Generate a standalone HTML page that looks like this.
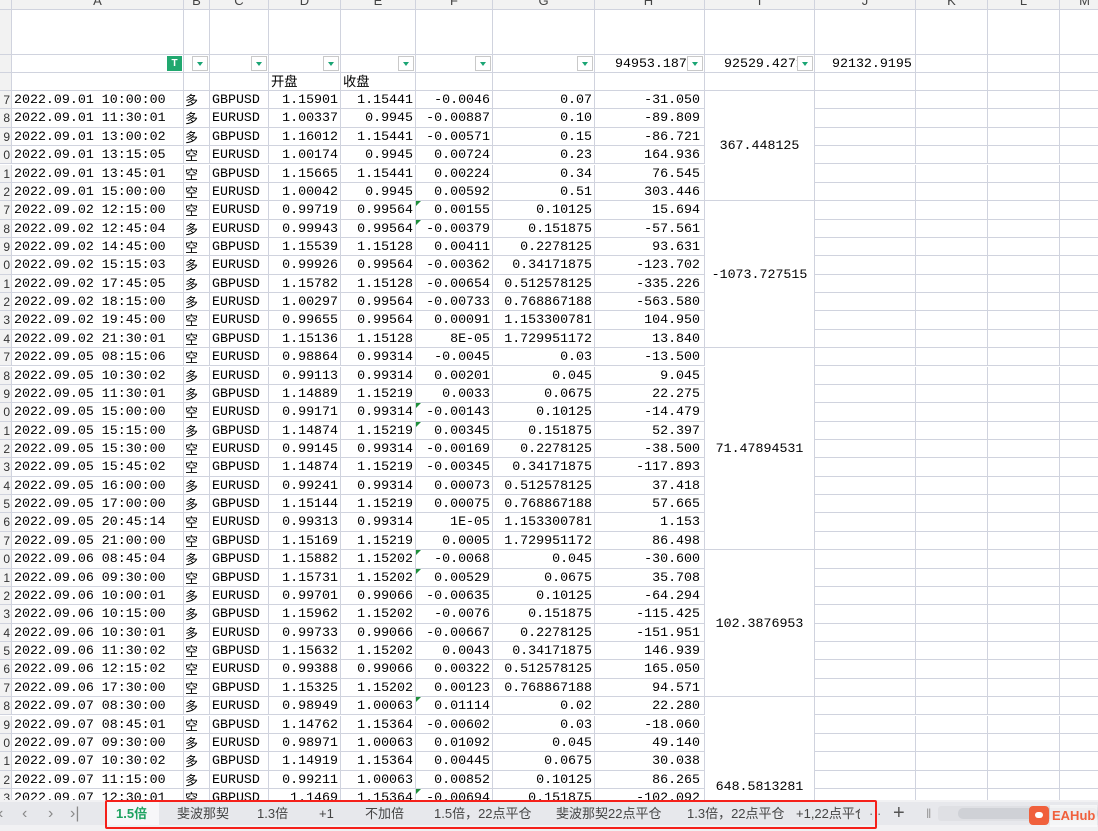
<!DOCTYPE html>
<html style="overflow:hidden;height:831px"><head><meta charset="utf-8">
<style>
*{margin:0;padding:0;box-sizing:border-box}
body{width:1098px;height:831px;overflow:hidden;background:#fff;position:relative;font-family:"Liberation Mono","Noto Sans CJK SC",monospace;font-size:13.3px;color:#000}
.r{position:absolute;left:0;height:18.4px;display:flex;width:1110px}
.c{border-right:1px solid #d0d3de;border-bottom:1px solid #d0d3de;height:100%;overflow:hidden;white-space:nowrap;line-height:18px;padding:0 2px;flex:none;position:relative}
.rh{width:12px;background:#f2f2f2;color:#333;font-size:12px;text-align:right;padding:0 1px;font-family:"Liberation Sans",sans-serif}
.a{width:172px}.b{width:26px;font-family:"Noto Sans CJK SC",sans-serif;font-size:13px;padding:0 1px}.cc{width:59px}.d{width:72px;text-align:right}.e{width:75px;text-align:right}.f{width:77px;text-align:right}.g{width:102px;text-align:right}.h{width:110px;text-align:right;padding-right:4px}.i{width:110px;border-bottom:none}.j{width:101px}.k{width:72px}.l{width:72px}.m{width:50px}
.hd .c{background:#f2f2f2;text-align:center;line-height:2px;color:#444;font-family:"Liberation Sans",sans-serif;font-size:13px}
.fb{position:absolute;right:1px;top:1px;width:16px;height:15px;background:#fff;border:1px solid #c9c9c9}
.fb:after{content:"";position:absolute;left:4px;top:5px;border-left:3.5px solid transparent;border-right:3.5px solid transparent;border-top:4px solid #1aa574}
.tri{position:absolute;left:0;top:0;border-top:5px solid #1e8f3a;border-right:5px solid transparent}
.mg{position:absolute;left:705px;width:110px;border-right:1px solid #d0d3de;border-bottom:1px solid #d0d3de;display:flex;align-items:center;justify-content:center;background:#fff}
.cn{font-family:"Liberation Sans","Noto Sans CJK SC",sans-serif}
</style></head><body>

<div class="r hd" style="top:0;height:10px"><div class="c rh"></div><div class="c a">A</div><div class="c b" style="text-align:center">B</div><div class="c cc">C</div><div class="c d" style="text-align:center">D</div><div class="c e" style="text-align:center">E</div><div class="c f" style="text-align:center">F</div><div class="c g" style="text-align:center">G</div><div class="c h" style="text-align:center">H</div><div class="c i" style="border-bottom:1px solid #d0d3de">I</div><div class="c j">J</div><div class="c k">K</div><div class="c l">L</div><div class="c m">M</div></div>

<div class="r" style="top:10px;height:45px"><div class="c rh"></div><div class="c a"></div><div class="c b"></div><div class="c cc"></div><div class="c d"></div><div class="c e"></div><div class="c f"></div><div class="c g"></div><div class="c h"></div><div class="c i" style="border-bottom:1px solid #d0d3de"></div><div class="c j"></div><div class="c k"></div><div class="c l"></div><div class="c m"></div></div>

<div class="r" style="top:55px;height:18px"><div class="c rh"></div><div class="c a"><span style="position:absolute;right:1px;top:1px;width:15px;height:15px;background:#21a86f;color:#fff;font-size:10px;line-height:15px;text-align:center;font-family:'Liberation Sans',sans-serif;font-weight:bold">T</span></div><div class="c b"><span class="fb"></span></div><div class="c cc"><span class="fb"></span></div><div class="c d"><span class="fb"></span></div><div class="c e"><span class="fb"></span></div><div class="c f"><span class="fb"></span></div><div class="c g"><span class="fb"></span></div><div class="c h" style="text-align:left;padding-left:20px">94953.1877<span class="fb"></span></div><div class="c i" style="border-bottom:1px solid #d0d3de;padding-left:19px">92529.4271<span class="fb"></span></div><div class="c j" style="overflow:visible;padding-left:17px">92132.9195</div><div class="c k"></div><div class="c l"></div><div class="c m"></div></div>

<div class="r" style="top:73px;height:18px"><div class="c rh"></div><div class="c a"></div><div class="c b"></div><div class="c cc"></div><div class="c d cn" style="text-align:left">开盘</div><div class="c e cn" style="text-align:left">收盘</div><div class="c f"></div><div class="c g"></div><div class="c h"></div><div class="c i" style="border-bottom:1px solid #d0d3de"></div><div class="c j"></div><div class="c k"></div><div class="c l"></div><div class="c m"></div></div>

<div class="r" style="top:91.0px"><div class="c rh">7</div><div class="c a">2022.09.01 10:00:00</div><div class="c b">多</div><div class="c cc">GBPUSD</div><div class="c d">1.15901</div><div class="c e">1.15441</div><div class="c f">-0.0046</div><div class="c g">0.07</div><div class="c h">-31.050</div><div class="c i"></div><div class="c j"></div><div class="c k"></div><div class="c l"></div><div class="c m"></div></div>
<div class="r" style="top:109.4px"><div class="c rh">8</div><div class="c a">2022.09.01 11:30:01</div><div class="c b">多</div><div class="c cc">EURUSD</div><div class="c d">1.00337</div><div class="c e">0.9945</div><div class="c f">-0.00887</div><div class="c g">0.10</div><div class="c h">-89.809</div><div class="c i"></div><div class="c j"></div><div class="c k"></div><div class="c l"></div><div class="c m"></div></div>
<div class="r" style="top:127.7px"><div class="c rh">9</div><div class="c a">2022.09.01 13:00:02</div><div class="c b">多</div><div class="c cc">GBPUSD</div><div class="c d">1.16012</div><div class="c e">1.15441</div><div class="c f">-0.00571</div><div class="c g">0.15</div><div class="c h">-86.721</div><div class="c i"></div><div class="c j"></div><div class="c k"></div><div class="c l"></div><div class="c m"></div></div>
<div class="r" style="top:146.1px"><div class="c rh">0</div><div class="c a">2022.09.01 13:15:05</div><div class="c b">空</div><div class="c cc">EURUSD</div><div class="c d">1.00174</div><div class="c e">0.9945</div><div class="c f">0.00724</div><div class="c g">0.23</div><div class="c h">164.936</div><div class="c i"></div><div class="c j"></div><div class="c k"></div><div class="c l"></div><div class="c m"></div></div>
<div class="r" style="top:164.5px"><div class="c rh">1</div><div class="c a">2022.09.01 13:45:01</div><div class="c b">空</div><div class="c cc">GBPUSD</div><div class="c d">1.15665</div><div class="c e">1.15441</div><div class="c f">0.00224</div><div class="c g">0.34</div><div class="c h">76.545</div><div class="c i"></div><div class="c j"></div><div class="c k"></div><div class="c l"></div><div class="c m"></div></div>
<div class="r" style="top:182.8px"><div class="c rh">2</div><div class="c a">2022.09.01 15:00:00</div><div class="c b">空</div><div class="c cc">EURUSD</div><div class="c d">1.00042</div><div class="c e">0.9945</div><div class="c f">0.00592</div><div class="c g">0.51</div><div class="c h">303.446</div><div class="c i"></div><div class="c j"></div><div class="c k"></div><div class="c l"></div><div class="c m"></div></div>
<div class="r" style="top:201.2px"><div class="c rh">7</div><div class="c a">2022.09.02 12:15:00</div><div class="c b">空</div><div class="c cc">EURUSD</div><div class="c d">0.99719</div><div class="c e">0.99564</div><div class="c f"><i class="tri"></i>0.00155</div><div class="c g">0.10125</div><div class="c h">15.694</div><div class="c i"></div><div class="c j"></div><div class="c k"></div><div class="c l"></div><div class="c m"></div></div>
<div class="r" style="top:219.6px"><div class="c rh">8</div><div class="c a">2022.09.02 12:45:04</div><div class="c b">多</div><div class="c cc">EURUSD</div><div class="c d">0.99943</div><div class="c e">0.99564</div><div class="c f"><i class="tri"></i>-0.00379</div><div class="c g">0.151875</div><div class="c h">-57.561</div><div class="c i"></div><div class="c j"></div><div class="c k"></div><div class="c l"></div><div class="c m"></div></div>
<div class="r" style="top:237.9px"><div class="c rh">9</div><div class="c a">2022.09.02 14:45:00</div><div class="c b">空</div><div class="c cc">GBPUSD</div><div class="c d">1.15539</div><div class="c e">1.15128</div><div class="c f">0.00411</div><div class="c g">0.2278125</div><div class="c h">93.631</div><div class="c i"></div><div class="c j"></div><div class="c k"></div><div class="c l"></div><div class="c m"></div></div>
<div class="r" style="top:256.3px"><div class="c rh">0</div><div class="c a">2022.09.02 15:15:03</div><div class="c b">多</div><div class="c cc">EURUSD</div><div class="c d">0.99926</div><div class="c e">0.99564</div><div class="c f">-0.00362</div><div class="c g">0.34171875</div><div class="c h">-123.702</div><div class="c i"></div><div class="c j"></div><div class="c k"></div><div class="c l"></div><div class="c m"></div></div>
<div class="r" style="top:274.7px"><div class="c rh">1</div><div class="c a">2022.09.02 17:45:05</div><div class="c b">多</div><div class="c cc">GBPUSD</div><div class="c d">1.15782</div><div class="c e">1.15128</div><div class="c f">-0.00654</div><div class="c g">0.512578125</div><div class="c h">-335.226</div><div class="c i"></div><div class="c j"></div><div class="c k"></div><div class="c l"></div><div class="c m"></div></div>
<div class="r" style="top:293.0px"><div class="c rh">2</div><div class="c a">2022.09.02 18:15:00</div><div class="c b">多</div><div class="c cc">EURUSD</div><div class="c d">1.00297</div><div class="c e">0.99564</div><div class="c f">-0.00733</div><div class="c g">0.768867188</div><div class="c h">-563.580</div><div class="c i"></div><div class="c j"></div><div class="c k"></div><div class="c l"></div><div class="c m"></div></div>
<div class="r" style="top:311.4px"><div class="c rh">3</div><div class="c a">2022.09.02 19:45:00</div><div class="c b">空</div><div class="c cc">EURUSD</div><div class="c d">0.99655</div><div class="c e">0.99564</div><div class="c f">0.00091</div><div class="c g">1.153300781</div><div class="c h">104.950</div><div class="c i"></div><div class="c j"></div><div class="c k"></div><div class="c l"></div><div class="c m"></div></div>
<div class="r" style="top:329.8px"><div class="c rh">4</div><div class="c a">2022.09.02 21:30:01</div><div class="c b">空</div><div class="c cc">GBPUSD</div><div class="c d">1.15136</div><div class="c e">1.15128</div><div class="c f">8E-05</div><div class="c g">1.729951172</div><div class="c h">13.840</div><div class="c i"></div><div class="c j"></div><div class="c k"></div><div class="c l"></div><div class="c m"></div></div>
<div class="r" style="top:348.1px"><div class="c rh">7</div><div class="c a">2022.09.05 08:15:06</div><div class="c b">空</div><div class="c cc">EURUSD</div><div class="c d">0.98864</div><div class="c e">0.99314</div><div class="c f">-0.0045</div><div class="c g">0.03</div><div class="c h">-13.500</div><div class="c i"></div><div class="c j"></div><div class="c k"></div><div class="c l"></div><div class="c m"></div></div>
<div class="r" style="top:366.5px"><div class="c rh">8</div><div class="c a">2022.09.05 10:30:02</div><div class="c b">多</div><div class="c cc">EURUSD</div><div class="c d">0.99113</div><div class="c e">0.99314</div><div class="c f">0.00201</div><div class="c g">0.045</div><div class="c h">9.045</div><div class="c i"></div><div class="c j"></div><div class="c k"></div><div class="c l"></div><div class="c m"></div></div>
<div class="r" style="top:384.9px"><div class="c rh">9</div><div class="c a">2022.09.05 11:30:01</div><div class="c b">多</div><div class="c cc">GBPUSD</div><div class="c d">1.14889</div><div class="c e">1.15219</div><div class="c f">0.0033</div><div class="c g">0.0675</div><div class="c h">22.275</div><div class="c i"></div><div class="c j"></div><div class="c k"></div><div class="c l"></div><div class="c m"></div></div>
<div class="r" style="top:403.2px"><div class="c rh">0</div><div class="c a">2022.09.05 15:00:00</div><div class="c b">空</div><div class="c cc">EURUSD</div><div class="c d">0.99171</div><div class="c e">0.99314</div><div class="c f"><i class="tri"></i>-0.00143</div><div class="c g">0.10125</div><div class="c h">-14.479</div><div class="c i"></div><div class="c j"></div><div class="c k"></div><div class="c l"></div><div class="c m"></div></div>
<div class="r" style="top:421.6px"><div class="c rh">1</div><div class="c a">2022.09.05 15:15:00</div><div class="c b">多</div><div class="c cc">GBPUSD</div><div class="c d">1.14874</div><div class="c e">1.15219</div><div class="c f"><i class="tri"></i>0.00345</div><div class="c g">0.151875</div><div class="c h">52.397</div><div class="c i"></div><div class="c j"></div><div class="c k"></div><div class="c l"></div><div class="c m"></div></div>
<div class="r" style="top:440.0px"><div class="c rh">2</div><div class="c a">2022.09.05 15:30:00</div><div class="c b">空</div><div class="c cc">EURUSD</div><div class="c d">0.99145</div><div class="c e">0.99314</div><div class="c f">-0.00169</div><div class="c g">0.2278125</div><div class="c h">-38.500</div><div class="c i"></div><div class="c j"></div><div class="c k"></div><div class="c l"></div><div class="c m"></div></div>
<div class="r" style="top:458.3px"><div class="c rh">3</div><div class="c a">2022.09.05 15:45:02</div><div class="c b">空</div><div class="c cc">GBPUSD</div><div class="c d">1.14874</div><div class="c e">1.15219</div><div class="c f">-0.00345</div><div class="c g">0.34171875</div><div class="c h">-117.893</div><div class="c i"></div><div class="c j"></div><div class="c k"></div><div class="c l"></div><div class="c m"></div></div>
<div class="r" style="top:476.7px"><div class="c rh">4</div><div class="c a">2022.09.05 16:00:00</div><div class="c b">多</div><div class="c cc">EURUSD</div><div class="c d">0.99241</div><div class="c e">0.99314</div><div class="c f">0.00073</div><div class="c g">0.512578125</div><div class="c h">37.418</div><div class="c i"></div><div class="c j"></div><div class="c k"></div><div class="c l"></div><div class="c m"></div></div>
<div class="r" style="top:495.1px"><div class="c rh">5</div><div class="c a">2022.09.05 17:00:00</div><div class="c b">多</div><div class="c cc">GBPUSD</div><div class="c d">1.15144</div><div class="c e">1.15219</div><div class="c f">0.00075</div><div class="c g">0.768867188</div><div class="c h">57.665</div><div class="c i"></div><div class="c j"></div><div class="c k"></div><div class="c l"></div><div class="c m"></div></div>
<div class="r" style="top:513.4px"><div class="c rh">6</div><div class="c a">2022.09.05 20:45:14</div><div class="c b">空</div><div class="c cc">EURUSD</div><div class="c d">0.99313</div><div class="c e">0.99314</div><div class="c f">1E-05</div><div class="c g">1.153300781</div><div class="c h">1.153</div><div class="c i"></div><div class="c j"></div><div class="c k"></div><div class="c l"></div><div class="c m"></div></div>
<div class="r" style="top:531.8px"><div class="c rh">7</div><div class="c a">2022.09.05 21:00:00</div><div class="c b">空</div><div class="c cc">GBPUSD</div><div class="c d">1.15169</div><div class="c e">1.15219</div><div class="c f">0.0005</div><div class="c g">1.729951172</div><div class="c h">86.498</div><div class="c i"></div><div class="c j"></div><div class="c k"></div><div class="c l"></div><div class="c m"></div></div>
<div class="r" style="top:550.2px"><div class="c rh">0</div><div class="c a">2022.09.06 08:45:04</div><div class="c b">多</div><div class="c cc">GBPUSD</div><div class="c d">1.15882</div><div class="c e">1.15202</div><div class="c f"><i class="tri"></i>-0.0068</div><div class="c g">0.045</div><div class="c h">-30.600</div><div class="c i"></div><div class="c j"></div><div class="c k"></div><div class="c l"></div><div class="c m"></div></div>
<div class="r" style="top:568.5px"><div class="c rh">1</div><div class="c a">2022.09.06 09:30:00</div><div class="c b">空</div><div class="c cc">GBPUSD</div><div class="c d">1.15731</div><div class="c e">1.15202</div><div class="c f"><i class="tri"></i>0.00529</div><div class="c g">0.0675</div><div class="c h">35.708</div><div class="c i"></div><div class="c j"></div><div class="c k"></div><div class="c l"></div><div class="c m"></div></div>
<div class="r" style="top:586.9px"><div class="c rh">2</div><div class="c a">2022.09.06 10:00:01</div><div class="c b">多</div><div class="c cc">EURUSD</div><div class="c d">0.99701</div><div class="c e">0.99066</div><div class="c f">-0.00635</div><div class="c g">0.10125</div><div class="c h">-64.294</div><div class="c i"></div><div class="c j"></div><div class="c k"></div><div class="c l"></div><div class="c m"></div></div>
<div class="r" style="top:605.3px"><div class="c rh">3</div><div class="c a">2022.09.06 10:15:00</div><div class="c b">多</div><div class="c cc">GBPUSD</div><div class="c d">1.15962</div><div class="c e">1.15202</div><div class="c f">-0.0076</div><div class="c g">0.151875</div><div class="c h">-115.425</div><div class="c i"></div><div class="c j"></div><div class="c k"></div><div class="c l"></div><div class="c m"></div></div>
<div class="r" style="top:623.6px"><div class="c rh">4</div><div class="c a">2022.09.06 10:30:01</div><div class="c b">多</div><div class="c cc">EURUSD</div><div class="c d">0.99733</div><div class="c e">0.99066</div><div class="c f">-0.00667</div><div class="c g">0.2278125</div><div class="c h">-151.951</div><div class="c i"></div><div class="c j"></div><div class="c k"></div><div class="c l"></div><div class="c m"></div></div>
<div class="r" style="top:642.0px"><div class="c rh">5</div><div class="c a">2022.09.06 11:30:02</div><div class="c b">空</div><div class="c cc">GBPUSD</div><div class="c d">1.15632</div><div class="c e">1.15202</div><div class="c f">0.0043</div><div class="c g">0.34171875</div><div class="c h">146.939</div><div class="c i"></div><div class="c j"></div><div class="c k"></div><div class="c l"></div><div class="c m"></div></div>
<div class="r" style="top:660.4px"><div class="c rh">6</div><div class="c a">2022.09.06 12:15:02</div><div class="c b">空</div><div class="c cc">EURUSD</div><div class="c d">0.99388</div><div class="c e">0.99066</div><div class="c f">0.00322</div><div class="c g">0.512578125</div><div class="c h">165.050</div><div class="c i"></div><div class="c j"></div><div class="c k"></div><div class="c l"></div><div class="c m"></div></div>
<div class="r" style="top:678.7px"><div class="c rh">7</div><div class="c a">2022.09.06 17:30:00</div><div class="c b">空</div><div class="c cc">GBPUSD</div><div class="c d">1.15325</div><div class="c e">1.15202</div><div class="c f">0.00123</div><div class="c g">0.768867188</div><div class="c h">94.571</div><div class="c i"></div><div class="c j"></div><div class="c k"></div><div class="c l"></div><div class="c m"></div></div>
<div class="r" style="top:697.1px"><div class="c rh">8</div><div class="c a">2022.09.07 08:30:00</div><div class="c b">多</div><div class="c cc">EURUSD</div><div class="c d">0.98949</div><div class="c e">1.00063</div><div class="c f"><i class="tri"></i>0.01114</div><div class="c g">0.02</div><div class="c h">22.280</div><div class="c i"></div><div class="c j"></div><div class="c k"></div><div class="c l"></div><div class="c m"></div></div>
<div class="r" style="top:715.5px"><div class="c rh">9</div><div class="c a">2022.09.07 08:45:01</div><div class="c b">空</div><div class="c cc">GBPUSD</div><div class="c d">1.14762</div><div class="c e">1.15364</div><div class="c f">-0.00602</div><div class="c g">0.03</div><div class="c h">-18.060</div><div class="c i"></div><div class="c j"></div><div class="c k"></div><div class="c l"></div><div class="c m"></div></div>
<div class="r" style="top:733.8px"><div class="c rh">0</div><div class="c a">2022.09.07 09:30:00</div><div class="c b">多</div><div class="c cc">EURUSD</div><div class="c d">0.98971</div><div class="c e">1.00063</div><div class="c f">0.01092</div><div class="c g">0.045</div><div class="c h">49.140</div><div class="c i"></div><div class="c j"></div><div class="c k"></div><div class="c l"></div><div class="c m"></div></div>
<div class="r" style="top:752.2px"><div class="c rh">1</div><div class="c a">2022.09.07 10:30:02</div><div class="c b">多</div><div class="c cc">GBPUSD</div><div class="c d">1.14919</div><div class="c e">1.15364</div><div class="c f">0.00445</div><div class="c g">0.0675</div><div class="c h">30.038</div><div class="c i"></div><div class="c j"></div><div class="c k"></div><div class="c l"></div><div class="c m"></div></div>
<div class="r" style="top:770.6px"><div class="c rh">2</div><div class="c a">2022.09.07 11:15:00</div><div class="c b">多</div><div class="c cc">EURUSD</div><div class="c d">0.99211</div><div class="c e">1.00063</div><div class="c f">0.00852</div><div class="c g">0.10125</div><div class="c h">86.265</div><div class="c i"></div><div class="c j"></div><div class="c k"></div><div class="c l"></div><div class="c m"></div></div>
<div class="r" style="top:788.9px"><div class="c rh">3</div><div class="c a">2022.09.07 12:30:01</div><div class="c b">空</div><div class="c cc">GBPUSD</div><div class="c d">1.1469</div><div class="c e">1.15364</div><div class="c f"><i class="tri"></i>-0.00694</div><div class="c g">0.151875</div><div class="c h">-102.092</div><div class="c i"></div><div class="c j"></div><div class="c k"></div><div class="c l"></div><div class="c m"></div></div>

<div class="mg" style="top:91px;height:110.2px">367.448125</div>
<div class="mg" style="top:201.2px;height:146.9px">-1073.727515</div>
<div class="mg" style="top:348.1px;height:202.1px">71.47894531</div>
<div class="mg" style="top:550.2px;height:146.9px">102.3876953</div>
<div class="mg" style="top:697.1px;height:103px;border-bottom:none;align-items:flex-end;padding-bottom:6px">648.5813281</div>

<div style="position:absolute;left:0;top:800px;width:1098px;height:31px;background:#f1f1f3"></div>
<div style="position:absolute;left:0;top:802px;width:1098px;height:23px;background:#e7e8ec"></div>
<div class="cn" style="position:absolute;left:0;top:802px;height:23px;line-height:23px;font-size:16px;color:#888">
<span style="position:absolute;left:-2px">‹</span><span style="position:absolute;left:22px">‹</span><span style="position:absolute;left:48px">›</span><span style="position:absolute;left:70px">›|</span></div>
<div style="position:absolute;left:105px;top:802px;width:54px;height:23px;background:#f7f7f9"></div>
<div class="cn" style="position:absolute;top:802px;height:23px;line-height:23px;font-size:13px;color:#444;left:0;width:1098px;white-space:nowrap">
<span style="position:absolute;left:116px;color:#1ea260;font-weight:bold">1.5倍</span>
<span style="position:absolute;left:177px">斐波那契</span>
<span style="position:absolute;left:257px">1.3倍</span>
<span style="position:absolute;left:319px">+1</span>
<span style="position:absolute;left:365px">不加倍</span>
<span style="position:absolute;left:434px">1.5倍，22点平仓</span>
<span style="position:absolute;left:556px">斐波那契22点平仓</span>
<span style="position:absolute;left:687px">1.3倍，22点平仓</span>
<span style="position:absolute;left:796px;width:64px;overflow:hidden;display:inline-block">+1,22点平仓</span>
<span style="position:absolute;left:869px;color:#666">· ·</span>
<span style="position:absolute;left:893px;font-size:20px;color:#555">+</span>
<span style="position:absolute;left:926px;color:#999">‖</span>
</div>
<div style="position:absolute;left:938px;top:806px;width:160px;height:15px;background:#dfe0e4;border-radius:3px"></div>
<div style="position:absolute;left:958px;top:808px;width:140px;height:11px;background:#cfd1d6;border-radius:5px"></div>
<div style="position:absolute;left:105px;top:800px;width:772px;height:29px;border:2px solid #f5201a;border-radius:2px"></div>
<div style="position:absolute;left:1029px;top:806px;width:20px;height:19px;background:#f0603c;border-radius:4px"></div>
<div style="position:absolute;left:1035px;top:812px;width:8px;height:6px;background:#fff;border-radius:3px"></div>
<div style="position:absolute;left:1050px;top:805px;height:22px;line-height:22px;font-family:'Liberation Sans',sans-serif;font-weight:bold;font-size:13px;color:#f0603c;background:rgba(255,255,255,0.6);padding:0 2px">EAHub</div>
</body></html>
